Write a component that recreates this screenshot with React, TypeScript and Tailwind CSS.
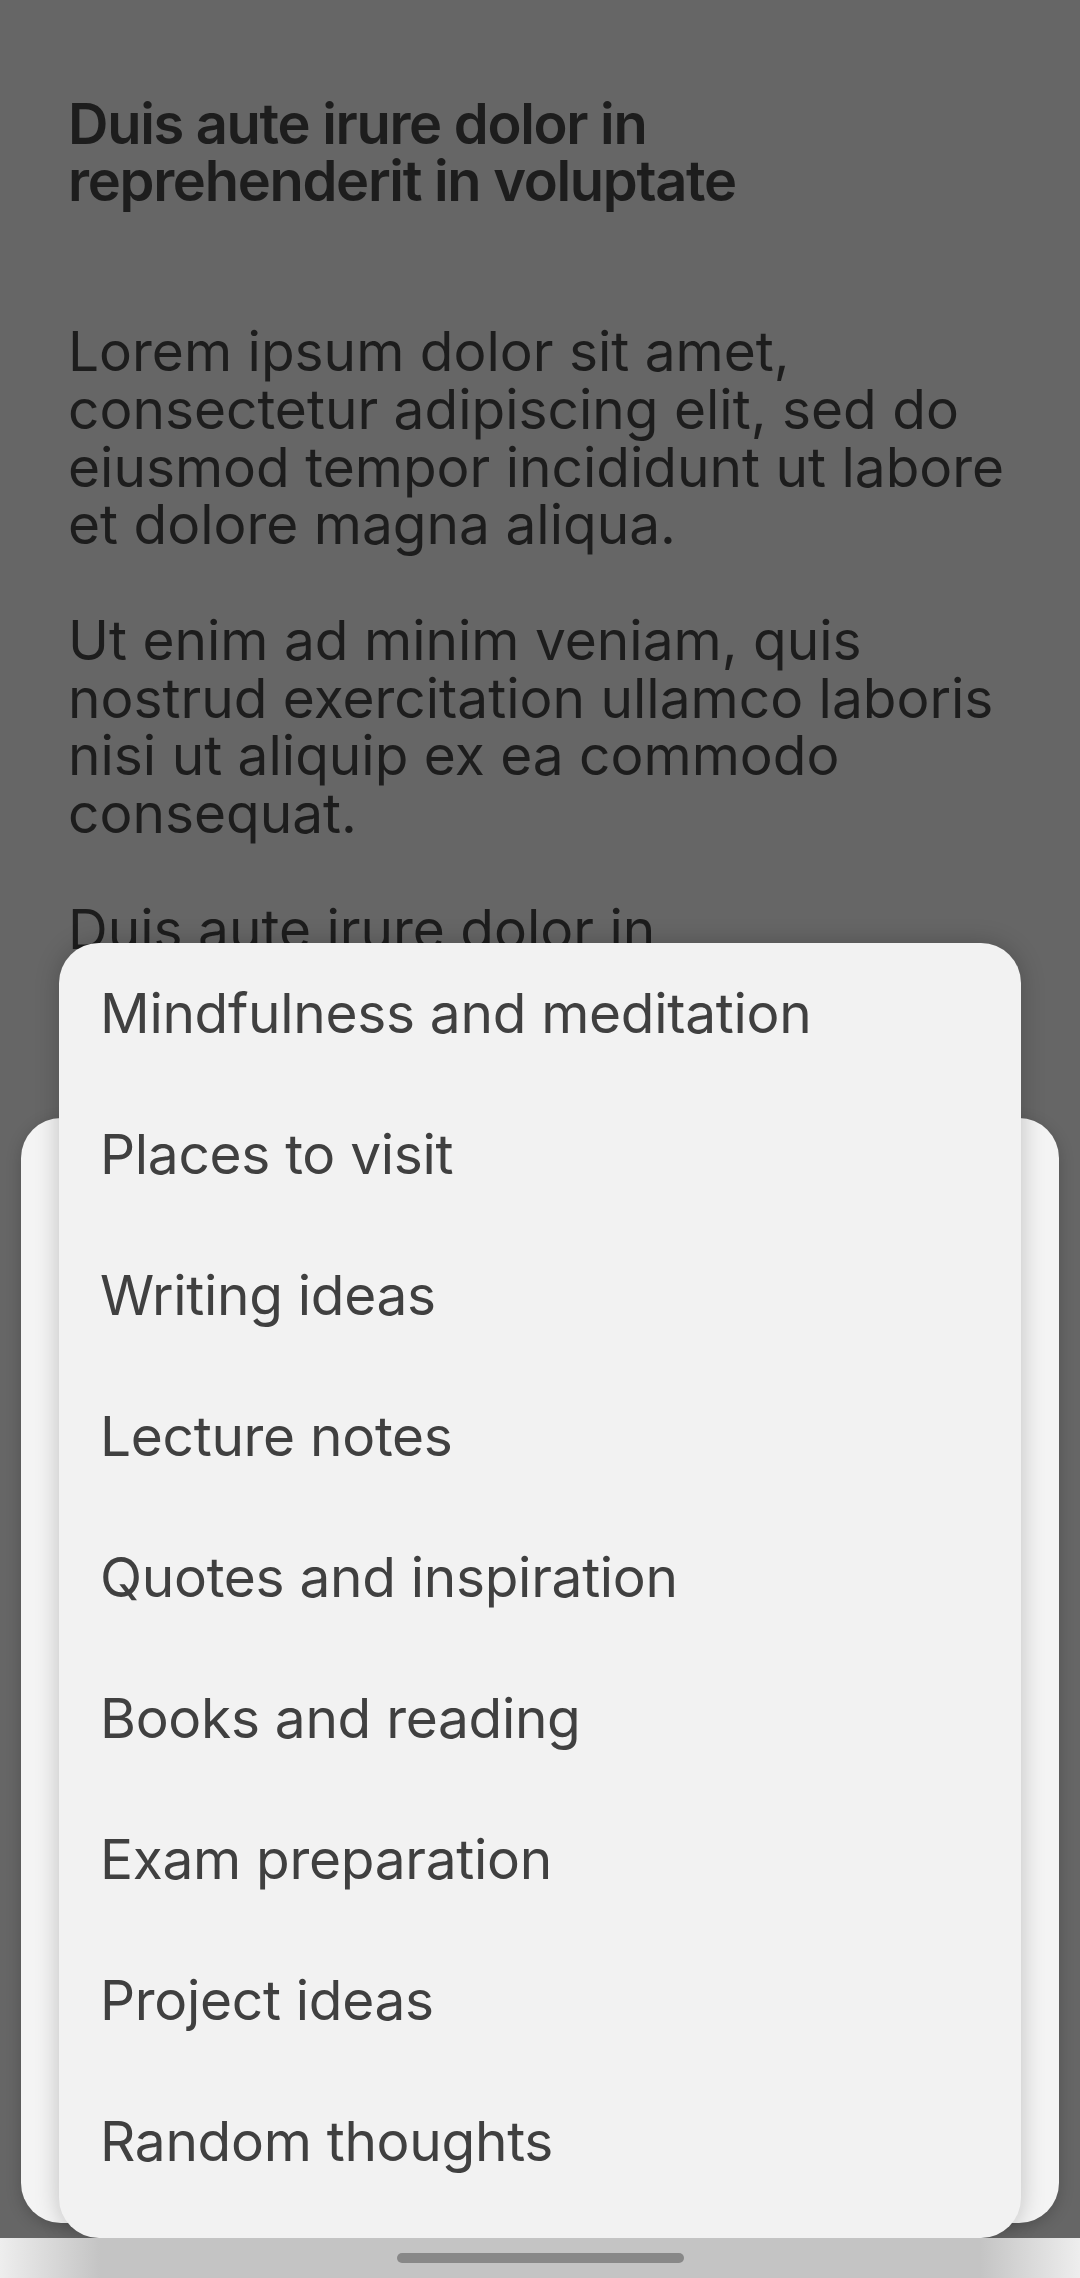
const topics = [
  'Mindfulness and meditation',
  'Places to visit',
  'Writing ideas',
  'Lecture notes',
  'Quotes and inspiration',
  'Books and reading',
  'Exam preparation',
  'Project ideas',
  'Random thoughts',
];

export default function App() {
  return (
    <div className="relative flex h-[2278px] w-[1080px] flex-col overflow-hidden bg-[#666666] font-['Inter',sans-serif]">
      {/* Note content, dimmed by the scrim */}
      <main className="flex-1 px-[68px] pt-[96px] text-[#1d1d1d]">
        <h1 className="text-[56px] font-semibold leading-[57px] tracking-[-1.3px]">
          Duis aute irure dolor in
          <br />
          reprehenderit in voluptate
        </h1>
        <div className="mt-[113px] space-y-[57.75px] text-[55px] leading-[57.75px]">
          <p>
            Lorem ipsum dolor sit amet,
            <br />
            consectetur adipiscing elit, sed do
            <br />
            eiusmod tempor incididunt ut labore
            <br />
            et dolore magna aliqua.
          </p>
          <p>
            Ut enim ad minim veniam, quis
            <br />
            nostrud exercitation ullamco laboris
            <br />
            nisi ut aliquip ex ea commodo
            <br />
            consequat.
          </p>
          <p>
            Duis aute irure dolor in
            <br />
            reprehenderit in voluptate velit esse
          </p>
        </div>
      </main>

      {/* Bottom sheet behind the menu */}
      <div className="absolute left-[21px] right-[21px] top-[1118px] h-[1105px] rounded-[40px] bg-[#f4f4f4] shadow-[0_4px_16px_rgba(0,0,0,0.2)]" />

      {/* Topic menu */}
      <ul className="absolute left-[59px] right-[59px] top-[943px] h-[1295px] rounded-[40px] bg-[#f2f2f2] pb-[26px] shadow-[0_0_24px_rgba(0,0,0,0.22)]">
        {topics.map((t) => (
          <li key={t} className="flex h-[141px] items-center px-[41px] text-[55px] tracking-[-0.3px] text-[#404040]">
            {t}
          </li>
        ))}
      </ul>

      {/* Gesture nav bar */}
      <div className="relative z-10 flex h-[40px] items-center justify-center bg-[linear-gradient(to_right,#eeeeee,#c4c4c4_100px,#c4c4c4_980px,#eeeeee)]">
        <div className="h-[10px] w-[287px] rounded-full bg-[#888888]" />
      </div>
    </div>
  );
}
